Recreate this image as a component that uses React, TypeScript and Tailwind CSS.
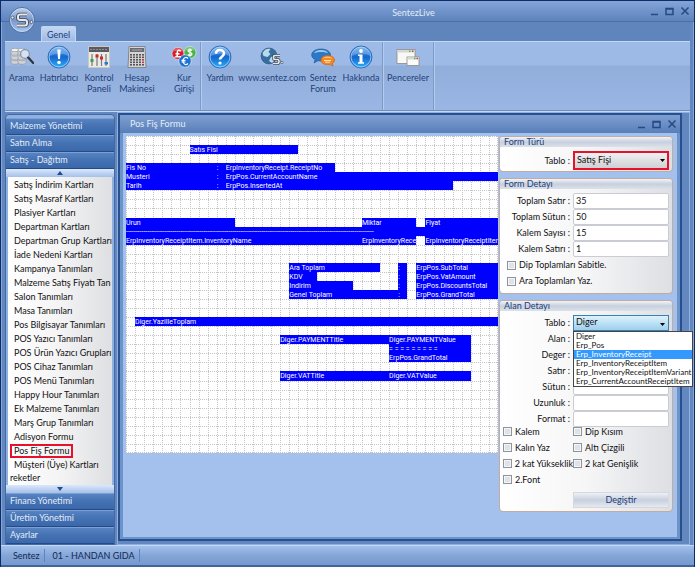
import type { ReactNode } from "react";

type Block = { row: number; col: number; end: number; text?: string };

const COLS = 41;
const ROWS = 35;

const fills: Block[] = [
  { row: 1, col: 7, end: 19, text: "Satıs Fisi" },
  { row: 3, col: 0, end: 23, text: "Fis No" },
  { row: 4, col: 0, end: 41, text: "Musteri" },
  { row: 5, col: 0, end: 36, text: "Tarih" },
  { row: 9, col: 0, end: 12, text: "Urun" },
  { row: 9, col: 26, end: 32, text: "Miktar" },
  { row: 9, col: 33, end: 41, text: "Fiyat" },
  { row: 10, col: 0, end: 41 },
  { row: 11, col: 0, end: 26, text: "ErpInventoryReceiptItem.InventoryName" },
  { row: 11, col: 26, end: 32, text: "ErpInventoryRece" },
  { row: 11, col: 33, end: 41, text: "ErpInventoryReceiptItem" },
  { row: 14, col: 18, end: 28, text: "Ara Toplam" },
  { row: 14, col: 30, end: 31, text: ":" },
  { row: 14, col: 32, end: 41, text: "ErpPos.SubTotal" },
  { row: 15, col: 18, end: 21, text: "KDV" },
  { row: 15, col: 30, end: 31, text: ":" },
  { row: 15, col: 32, end: 41, text: "ErpPos.VatAmount" },
  { row: 16, col: 18, end: 25, text: "Indirim" },
  { row: 16, col: 30, end: 31, text: ":" },
  { row: 16, col: 32, end: 41, text: "ErpPos.DiscountsTotal" },
  { row: 17, col: 18, end: 31, text: "Genel Toplam" },
  { row: 17, col: 32, end: 41, text: "ErpPos.GrandTotal" },
  { row: 20, col: 1, end: 41, text: "Diger.YazilleToplam" },
  { row: 22, col: 17, end: 38, text: "Diger.PAYMENTTitle" },
  { row: 23, col: 29, end: 38, text: "= = = = = = = = =" },
  { row: 24, col: 29, end: 38, text: "ErpPos.GrandTotal" },
  { row: 26, col: 17, end: 38, text: "Diger.VATTitle" },
];

const overlays: Block[] = [
  { row: 3, col: 10, end: 11, text: ":" },
  { row: 3, col: 11, end: 23, text: "ErpInventoryReceipt.ReceiptNo" },
  { row: 4, col: 10, end: 11, text: ":" },
  { row: 4, col: 11, end: 32, text: "ErpPos.CurrentAccountName" },
  { row: 5, col: 10, end: 11, text: ":" },
  { row: 5, col: 11, end: 32, text: "ErpPos.InsertedAt" },
  { row: 10, col: 0, end: 28, text: "-".repeat(128) },
  { row: 17, col: 30, end: 31, text: ":" },
  { row: 22, col: 29, end: 38, text: "Diger.PAYMENTValue" },
  { row: 26, col: 29, end: 38, text: "Diger.VATValue" },
];

const place = (b: Block) => ({
  gridColumn: `${b.col + 1} / ${b.end + 1}`,
  gridRow: b.row + 1,
});

function Receipt() {
  return (
    <div className="relative h-[317px] w-[372px] shrink-0 bg-white">
      <svg className="absolute inset-0 size-full" viewBox="0 0 372 317" shapeRendering="crispEdges" stroke="#c4c4c4" strokeDasharray="1 1">
        {Array.from({ length: COLS + 1 }, (_, i) => {
          const x = Math.min(371, Math.round((i * 372) / COLS)) + 0.5;
          return <line key={i} x1={x} x2={x} y1="0" y2="317" />;
        })}
        {Array.from({ length: ROWS + 1 }, (_, i) => {
          const y = Math.min(316, Math.round((i * 317) / ROWS)) + 0.5;
          return <line key={i} x1="0" x2="372" y1={y} y2={y} />;
        })}
      </svg>
      <div className="relative grid size-full grid-cols-[repeat(41,minmax(0,1fr))] grid-rows-[repeat(35,minmax(0,1fr))] font-[Roboto,'Noto_Sans',sans-serif] text-[7px] leading-[10px] text-white">
        {fills.map((b, i) => (
          <div key={i} style={place(b)} className="overflow-hidden bg-[#0000fe] whitespace-nowrap">{b.text}</div>
        ))}
        {overlays.map((b, i) => (
          <div key={i} style={place(b)} className="overflow-hidden whitespace-nowrap">{b.text}</div>
        ))}
      </div>
    </div>
  );
}

function Orb({ children, id }: { children: ReactNode; id: string }) {
  return (
    <svg viewBox="0 0 24 24" className="size-6">
      <defs>
        <linearGradient id={id} x1="0" y1="0" x2="0" y2="1">
          <stop offset="0" stopColor="#5ba4ea" />
          <stop offset="0.5" stopColor="#1467cf" />
          <stop offset="1" stopColor="#2fb0f8" />
        </linearGradient>
      </defs>
      <circle cx="12" cy="12" r="11" fill={`url(#${id})`} stroke="#2a5fae" strokeWidth="0.8" />
      <circle cx="12" cy="12" r="9.9" fill="none" stroke="#a9d4fa" strokeWidth="0.8" />
      <path d="M3 11a9 9 0 0 1 18 0c-4-3-13-3-18 0z" fill="#fff" opacity="0.25" />
      {children}
    </svg>
  );
}

const SearchIcon = (
  <svg viewBox="0 0 24 24" className="size-6">
    {[0, 1].map((c) =>
      [14, 9.5, 5].map((y) => (
        <g key={`${c}${y}`} stroke="#8a8f98" strokeWidth="0.6">
          <path d={`M${1 + c * 7} ${y}v3.5c0 2.4 8 2.4 8 0v-3.5z`} fill="#cfd3d8" />
          <ellipse cx={5 + c * 7} cy={y} rx="4" ry="1.7" fill="#f2f3f5" />
        </g>
      )),
    )}
    <circle cx="15" cy="9" r="4.4" fill="#d3e2f4" stroke="#8794a8" strokeWidth="1.3" />
    <path d="M18.2 12.6l5 5.4" stroke="#2f3238" strokeWidth="2.2" strokeLinecap="round" />
  </svg>
);

const MixerIcon = (
  <svg viewBox="0 0 24 24" className="size-6">
    <rect x="1.5" y="1.5" width="21" height="21" fill="#ecebe7" stroke="#c9c8c3" />
    <path d="M2 2h20v5H2z" fill="#595b60" />
    <path d="M3 4.500h18" stroke="#8d8f94" strokeDasharray="2 1" />
    <path d="M5 9v12M10 9v12M14.500 9v12M19 9v12" stroke="#77797d" strokeWidth="1.200" />
    <path d="M3.500 14h3v3h-3z" fill="#36a33d" />
    <path d="M8.500 9.500h3v3h-3zM13 11.500h3v3h-3z" fill="#c92b22" />
    <path d="M17.500 17h3.500v2.500h-3.500z" fill="#2778cf" />
  </svg>
);

const CalculatorIcon = (
  <svg viewBox="0 0 24 24" className="size-6">
    <path d="M4 1.500h16l1 21H3z" fill="#d6d5d3" stroke="#75777b" strokeWidth="0.800" />
    <path d="M5 3h14v4H5z" fill="#686c72" />
    <path d="M7 5h10" stroke="#a8adb2" />
    {[9, 11.5, 14, 16.5, 19].map((y) =>
      [5, 8, 11, 14, 17].map((x) => (
        <rect key={`${x}-${y}`} x={x} y={y} width="2" height="1.6" fill={x === 17 && y > 13 && y < 18 ? "#c13b4c" : "#55575c"} />
      )),
    )}
  </svg>
);

const CurrencyIcon = (
  <svg viewBox="0 0 24 24" className="size-6 overflow-visible">
    <g stroke="#fff" strokeWidth="0.500">
      <circle cx="6" cy="8.500" r="6" fill="#d91c2b" />
      <circle cx="18" cy="7.500" r="6" fill="#4cb447" />
      <circle cx="13" cy="16" r="6.200" fill="#1c72d2" />
    </g>
    <path d="M1 7a5.200 5.200 0 0 1 10 0c-3-2-7-2-10 0zM13 6a5.200 5.200 0 0 1 10 0c-3-2-7-2-10 0z" fill="#fff" opacity="0.3" />
    <g fill="none" stroke="#fff" strokeWidth="1.500">
      <path d="M8.500 6.500C8 4.500 5 4.800 5.300 7.500L5.500 9.500C5.500 11 4.500 11.500 4 11.800H9M3.500 8.800H7.500" />
      <path d="M20 5.500c-1-1.200-4-1.200-4 .4s4 1.200 4 3-3 1.800-4.200.6M18 3.500v8" strokeWidth="1.200" />
      <path d="M16 13.500c-2-2-5-1-5 2.500s3 4.500 5 2.500M9.500 15.300h4M9.500 17h4" strokeWidth="1.200" />
    </g>
  </svg>
);

const GlobeIcon = (
  <svg viewBox="0 0 24 24" className="size-6">
    <circle cx="9" cy="11" r="8" fill="#376e9f" stroke="#28537d" strokeWidth="0.600" />
    <path d="M2.500 8c2-4 5-5 8-4l-2 3 2 2-3 3-4-1zM11 12l4-1 1 3-4 4-3-2z" fill="#b8d8ec" />
    <path d="M20 10.500h-5q-1.500 0-1.500 1.500v1q0 1.500 1.500 1.500h2.500q1.500 0 1.500 1.500v1q0 1.500-1.500 1.500H13" fill="none" stroke="#3d4653" strokeWidth="3" />
    <path d="M20 10.500h-5q-1.500 0-1.500 1.500v1q0 1.500 1.500 1.500h2.500q1.500 0 1.500 1.500v1q0 1.500-1.500 1.500H13" fill="none" stroke="#e3e6ea" strokeWidth="1.700" />
    <circle cx="22" cy="17.500" r="1.200" fill="#e3e6ea" stroke="#3d4653" strokeWidth="0.600" />
  </svg>
);

const ForumIcon = (
  <svg viewBox="0 0 24 24" className="size-6">
    <path d="M10 4c5.500 0 9.500 2.500 9.500 6s-4 6-9.500 6l-3-.3L3 18l1-3.500C2 13.500.7 12 .7 10 .7 6.500 4.500 4 10 4z" fill="#2c78c6" stroke="#1c5596" strokeWidth="0.600" />
    <path d="M3 8c2-4 12-4 14 0-4-1.500-10-1.500-14 0z" fill="#9ccbf2" />
    <path d="M16.500 10.500c4 0 7 1.800 7 4.500 0 1.500-.8 2.500-2 3.300L22 21l-3-1.500c-5 .8-9-1-9-4.500 0-2.700 2.500-4.500 6.500-4.500z" fill="#f5851f" stroke="#c35f0c" strokeWidth="0.600" />
    <path d="M12 13.500c2-2.500 7-2.500 9.500 0-3-1-6.500-1-9.500 0z" fill="#ffd1a0" />
    <path d="M13 15.500h7M14 17.200h5" stroke="#ffe4c8" />
  </svg>
);

const WindowsIcon = (
  <svg viewBox="0 0 24 24" className="size-6">
    <rect x="1" y="4.500" width="18" height="14" fill="#f8f8f7" stroke="#8d8b86" strokeWidth="0.800" />
    <path d="M1.500 5h17v2.500h-17z" fill="#d8d7d3" />
    <path d="M13 6.200h1.500" stroke="#57b24a" strokeWidth="1.500" />
    <path d="M16 6.200h1.500" stroke="#d0432f" strokeWidth="1.500" />
    <rect x="11" y="12" width="12" height="8.500" fill="#fbfbfa" stroke="#8d8b86" strokeWidth="0.800" />
    <path d="M11.500 12.500h11v2h-11z" fill="#d8d7d3" />
    <path d="M18 13.500h1.500" stroke="#57b24a" strokeWidth="1.500" />
    <path d="M20.500 13.500H22" stroke="#d0432f" strokeWidth="1.500" />
  </svg>
);

const ReminderIcon = (
  <Orb id="orb-reminder">
    <path d="M10.300 4.500h3.400l-.7 9.500h-2z" fill="#fff" />
    <circle cx="12" cy="17.500" r="1.800" fill="#fff" />
  </Orb>
);

const HelpIcon = (
  <Orb id="orb-help">
    <path d="M8 8.800C8 3.800 16 4 16 8.600c0 2.800-4 3-4 6" fill="none" stroke="#fff" strokeWidth="2.500" />
    <circle cx="12" cy="18" r="1.600" fill="#fff" />
  </Orb>
);

const InfoIcon = (
  <Orb id="orb-info">
    <circle cx="12" cy="6" r="1.900" fill="#fff" />
    <path d="M9 9.500h4.500v7.700H15v1.600H9v-1.600h1.500V11H9z" fill="#fff" />
  </Orb>
);

function Tool({ icon, label, width }: { icon: ReactNode; label: string; width: string }) {
  return (
    <button className={`flex shrink-0 flex-col items-center pt-[3px] ${width}`}>
      {icon}
      <span className="mt-[3px] text-center text-[9px] leading-[11px] whitespace-pre">{label}</span>
    </button>
  );
}

function WindowControls() {
  return (
    <svg viewBox="0 0 40 10" className="h-[10px] w-10" fill="none" stroke="#244a86" strokeWidth="1.5">
      <path d="M1 8.500h7" />
      <path d="M16 2.500h7v6h-7zM16 3h7" />
      <path d="M31.500 1.500l7 7M38.500 1.500l-7 7" />
    </svg>
  );
}

function NavHeader({ label }: { label: string }) {
  return (
    <button className="block h-[17px] w-full border-b border-[#234b8b] bg-linear-to-b from-[#5b86c4] via-[#4472b3] to-[#3b68aa] px-1 text-left text-[9px] leading-4 whitespace-nowrap text-[#e3ecf8] shadow-[inset_0_1px_0_#7da0d3]">
      {label}
    </button>
  );
}

function ScrollStrip({ up }: { up?: boolean }) {
  return (
    <button aria-label={up ? "Yukarı kaydır" : "Aşağı kaydır"} className="flex h-2 w-full items-center justify-center bg-linear-to-b from-[#dbe8fa] to-[#a4c0ea]">
      <svg viewBox="0 0 6 4" className="h-1 w-[6px]" fill="#24488a">
        <path d={up ? "M0 4l3-4 3 4z" : "M0 0h6l-3 4z"} />
      </svg>
    </button>
  );
}

const menu = [
  "Satış İndirim Kartları", "Satış Masraf Kartları", "Plasiyer Kartları", "Departman Kartları",
  "Departman Grup Kartları", "İade Nedeni Kartları", "Kampanya Tanımları", "Malzeme Satış Fiyatı Tan",
  "Salon Tanımları", "Masa Tanımları", "Pos Bilgisayar Tanımları", "POS Yazıcı Tanımları",
  "POS Ürün Yazıcı Grupları", "POS Cihaz Tanımları", "POS Menü Tanımları", "Happy Hour Tanımları",
  "Ek Malzeme Tanımları", "Marş Grup Tanımları", "Adisyon Formu", "Pos Fiş Formu", "Müşteri (Üye) Kartları",
];

function Sidebar() {
  return (
    <nav className="mt-[2px] flex w-[110px] shrink-0 flex-col rounded-t border border-[#45699f] bg-[#8fb0e2] pt-[3px]">
      <NavHeader label="Malzeme Yönetimi" />
      <NavHeader label="Satın Alma" />
      <NavHeader label="Satış - Dağıtım" />
      <ScrollStrip up />
      <div className="mx-[2px] flex-1 bg-linear-to-r from-white via-[#f4f4f5] to-[#dedfe2] pt-[1px] pl-[2px] text-[9px] leading-[14px] text-[#111]">
        {menu.map((m) => (
          <button key={m} className={`block h-[14px] border-2 px-[2px] text-left leading-[10px] whitespace-nowrap ${m === "Pos Fiş Formu" ? "border-[#e8112d]" : "border-transparent"}`}>
            {m}
          </button>
        ))}
        <button className="block h-3 leading-3">reketler</button>
      </div>
      <ScrollStrip />
      <NavHeader label="Finans Yönetimi" />
      <NavHeader label="Üretim Yönetimi" />
      <NavHeader label="Ayarlar" />
    </nav>
  );
}

function Card({ title, children }: { title: string; children: ReactNode }) {
  return (
    <section className="rounded-[4px] border border-[#c3ab9d] bg-linear-to-r from-white via-[#f6f6f7] to-[#dddfe3]">
      <h2 className="h-[10px] rounded-t-[3px] bg-linear-to-b from-[#f1f4f9] via-[#c7d0df] to-[#dce1e9] pl-1 leading-[10px] text-[#1c4079]">{title}</h2>
      {children}
    </section>
  );
}

function Field({ id, label, value }: { id: string; label: string; value?: string }) {
  return (
    <div className="flex h-4 items-center">
      <label htmlFor={id} className="w-[70px] text-right">{label} :</label>
      <input id={id} defaultValue={value} className="mr-[3px] ml-[3px] h-4 min-w-0 flex-1 rounded-[2px] border border-[#c9cdd3] bg-white px-[2px] pb-[2px] leading-3" />
    </div>
  );
}

function SelectField({ id, label, value, look }: { id: string; label: string; value: string; look: string }) {
  return (
    <div className="flex items-center">
      <label htmlFor={id} className="w-[70px] text-right">{label} :</label>
      <div className="relative mr-[3px] ml-[3px] flex-1">
        <select id={id} className={`block w-full appearance-none px-[2px] pb-[2px] leading-3 ${look}`}>
          <option>{value}</option>
        </select>
        <svg viewBox="0 0 5 3" className="pointer-events-none absolute top-2 right-1 h-[3px] w-[5px]">
          <path d="M0 0h5l-2.500 3z" />
        </svg>
      </div>
    </div>
  );
}

function Check({ label, top }: { label: string; top?: boolean }) {
  return (
    <label className={`flex h-4 gap-[3px] leading-[10px] whitespace-nowrap ${top ? "items-start" : "items-center"}`}>
      <input type="checkbox" className="size-[9px] appearance-none border border-[#8e949c] bg-[#dfe2e6] shadow-[inset_0_0_0_1px_#f5f6f7]" />
      {label}
    </label>
  );
}

const tables = ["Diger", "Erp_Pos", "Erp_InventoryReceipt", "Erp_InventoryReceiptItem", "Erp_InventoryReceiptItemVariant", "Erp_CurrentAccountReceiptItem"];

function Properties() {
  return (
    <div className="flex min-w-0 flex-1 flex-col gap-[6px] pl-[1px] text-[9px] leading-3 text-[#111]">
      <Card title="Form Türü">
        <div className="pt-1 pb-[1px]">
          <SelectField id="form-tablo" label="Tablo" value="Satış Fişi" look="h-[19px] border-2 border-[#e8112d] bg-linear-to-b from-[#f1f1f2] to-[#cfd0d3]" />
        </div>
      </Card>
      <Card title="Form Detayı">
        <div className="pt-1 pb-1">
          <Field id="toplam-satir" label="Toplam Satır" value="35" />
          <Field id="toplam-sutun" label="Toplam Sütun" value="50" />
          <Field id="kalem-sayisi" label="Kalem Sayısı" value="15" />
          <Field id="kalem-satiri" label="Kalem Satırı" value="1" />
          <div className="pl-[7px]">
            <Check label="Dip Toplamları Sabitle." />
            <Check label="Ara Toplamları Yaz." />
          </div>
        </div>
      </Card>
      <Card title="Alan Detayı">
        <div className="relative pt-1 pb-[3px]">
          <SelectField id="alan-tablo" label="Tablo" value="Diger" look="h-4 border border-[#3c7fb1] bg-linear-to-b from-[#def2fc] to-[#9cd0ee]" />
          <ul role="listbox" aria-label="Tablo" className="absolute top-5 left-[73px] z-10 border border-[#444] bg-white text-[8px] whitespace-nowrap">
            {tables.map((t) => (
              <li key={t} role="option" aria-selected={t === "Erp_InventoryReceipt"} className={`h-[9px] pr-[1px] pl-[2px] leading-[9px] ${t === "Erp_InventoryReceipt" ? "bg-[#3399ff] text-white" : ""}`}>{t}</li>
            ))}
          </ul>
          <Field id="alan" label="Alan" />
          <Field id="deger" label="Deger" />
          <Field id="satir" label="Satır" />
          <Field id="sutun" label="Sütun" />
          <Field id="uzunluk" label="Uzunluk" />
          <Field id="format" label="Format" />
          <div className="grid grid-cols-[70px_1fr] pl-[3px]">
            <Check top label="Kalem" />
            <Check top label="Dip Kısım" />
            <Check top label="Kalın Yaz" />
            <Check top label="Altı Çizgili" />
            <Check top label="2 kat Yükseklik" />
            <Check top label="2 kat Genişlik" />
            <Check top label="2.Font" />
          </div>
          <div className="flex pt-[1px] pr-[3px] pl-[73px]">
            <button className="h-4 flex-1 border border-[#d3d8e1] bg-linear-to-b from-[#eef1f6] via-[#c8d0de] to-[#e6e9ef] text-center leading-[14px] text-[#1c4079]">
              Degiştir
            </button>
          </div>
        </div>
      </Card>
    </div>
  );
}

export default function App() {
  return (
    <div className="flex min-h-screen flex-col border-x border-t border-[#0d2c6b] bg-[#6288bf] pr-1 pl-1 font-[Lato,'Noto_Sans',sans-serif] text-[#1f3f78] shadow-[inset_0_0_0_1px_#86a6d8]">
      <header className="relative">
        <div className="-mx-1 flex h-[21px] items-center border-b border-[#4c6fa8] bg-linear-to-b from-[#85a5d8] via-[#7093ca] via-50% to-[#5e84bd] pr-1">
          <h1 className="flex-1 pt-1 pl-44 text-center text-[9px] text-[#e3ecf8]">SentezLive</h1>
          <WindowControls />
        </div>
        <div className="flex h-[19px] items-end bg-[#6085bd] pl-9">
          <button className="h-[15px] w-[35px] rounded-t-[2px] border border-b-0 border-[#c0d5f3] bg-linear-to-b from-[#c3d7f4] to-[#9db9e5] text-[9px] leading-[13px]">Genel</button>
        </div>
        <button aria-label="Sentez" className="absolute top-[5px] left-[3px]">
          <svg viewBox="0 0 28 28" className="size-7">
            <defs>
              <linearGradient id="app-orb" x1="0" y1="0" x2="0" y2="1">
                <stop offset="0" stopColor="#c2d2ec" />
                <stop offset="0.5" stopColor="#7898ca" />
                <stop offset="1" stopColor="#abc8f1" />
              </linearGradient>
            </defs>
            <circle cx="14" cy="14" r="12.500" fill="url(#app-orb)" stroke="#4b6da4" />
            <circle cx="14" cy="14" r="11.500" fill="none" stroke="#d4e2f7" strokeWidth="0.700" />
            <path d="M19 8.500h-7q-2 0-2 2v1.500q0 2 2 2h5q2 0 2 2v1.500q0 2-2 2H9" fill="none" stroke="#3a4658" strokeWidth="3.600" />
            <path d="M19 8.500h-7q-2 0-2 2v1.500q0 2 2 2h5q2 0 2 2v1.500q0 2-2 2H9" fill="none" stroke="#e6e8eb" strokeWidth="2" />
            <circle cx="4.500" cy="11.500" r="1.500" fill="#e6e8eb" stroke="#3a4658" strokeWidth="0.700" />
            <circle cx="23.500" cy="16" r="1.500" fill="#e6e8eb" stroke="#3a4658" strokeWidth="0.700" />
          </svg>
        </button>
        <div className="flex h-[70px] border-t border-b border-t-[#c4d8f5] border-b-[#6f8fc0] bg-[linear-gradient(to_bottom,#9ebbe7_0,#9db9e5_23px,#91aedb_24px,#9ab6e4_100%)]">
          <div className="flex">
            <Tool icon={SearchIcon} label="Arama" width="w-[33px]" />
            <Tool icon={ReminderIcon} label="Hatırlatıcı" width="w-[42px]" />
            <Tool icon={MixerIcon} label={"Kontrol\nPaneli"} width="w-[38px]" />
            <Tool icon={CalculatorIcon} label={"Hesap\nMakinesi"} width="w-[38px]" />
            <Tool icon={CurrencyIcon} label={"Kur\nGirişi"} width="ml-3 w-8" />
          </div>
          <div className="flex border-x border-l-[#7b9aca] border-r-[#7b9aca] pl-[1px] shadow-[1px_0_0_#b4cbee,inset_1px_0_0_#b4cbee]">
            <Tool icon={HelpIcon} label="Yardım" width="w-9" />
            <Tool icon={GlobeIcon} label="www.sentez.com" width="w-[68px]" />
            <Tool icon={ForumIcon} label={"Sentez\nForum"} width="w-[34px]" />
            <Tool icon={InfoIcon} label="Hakkında" width="w-[42px]" />
          </div>
          <div className="flex border-r border-[#7b9aca] shadow-[1px_0_0_#b4cbee]">
            <Tool icon={WindowsIcon} label="Pencereler" width="w-[50px]" />
          </div>
        </div>
      </header>

      <div className="flex flex-1 gap-[2px] border-t border-[#c4d8f5]">
        <Sidebar />
        <main className="min-w-0 flex-1 border border-[#8fb0e2] bg-[#6288bf] pr-[7px] pb-[3px]">
          <div className="flex h-full flex-col border-2 border-[#28508f] bg-[#6d93cb] px-[3px] pb-[2px]">
            <div className="-mx-[3px] flex h-[18px] items-center justify-between bg-linear-to-b from-[#7f9fd1] to-[#587fb9] pr-[3px] pl-[10px] text-[9px] text-[#e3ecf8]">
              <h2>Pos Fiş Formu</h2>
              <WindowControls />
            </div>
            <div className="flex flex-1 items-start bg-[#a3c1ec] pt-[3px] pr-1 pl-[3px]">
              <Receipt />
              <Properties />
            </div>
          </div>
        </main>
      </div>

      <footer className="-mx-1 flex h-[22px] items-center border-t border-b-2 border-t-[#c4d8f5] border-b-[#3f659f] bg-linear-to-b from-[#a3c1ec] via-[#84a5d8] to-[#7899cd] pl-2 text-[9px] text-[#13294f]">
        <span className="border-r border-[#6384b8] pr-1 pl-1">Sentez</span>
        <span className="border-r border-[#6384b8] pr-1 pl-2">01 - HANDAN GIDA</span>
      </footer>
    </div>
  );
}
